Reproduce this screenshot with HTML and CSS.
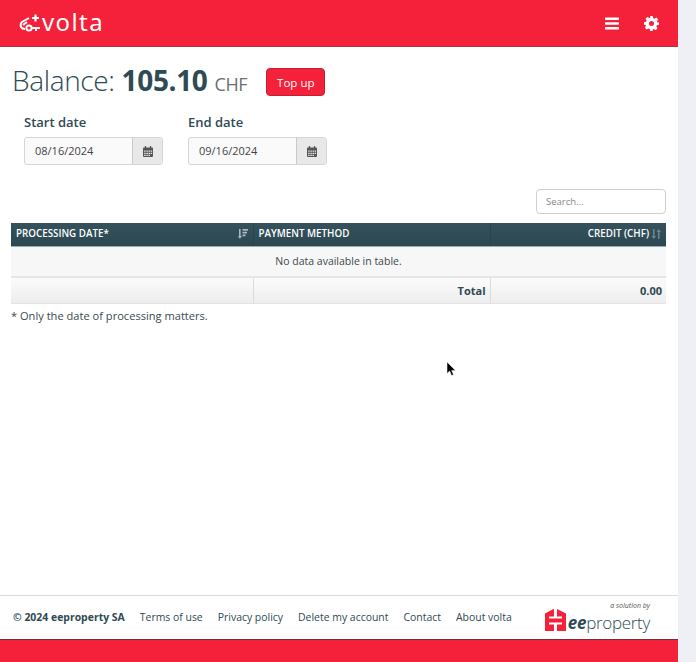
FILE: index.html

```html
<!doctype html>
<html>
<head>
	<meta charset='utf-8'>
	<title>volta</title>
	<link rel="stylesheet" href="styles.css">
</head>
<body>
<div class='app'>
	<div class='page'>
		<header class='topbar'>
			<a class='logo'>
				<svg width='23' height='20' viewBox='0 0 23 20' fill='none' stroke='#fff' stroke-width='2'>
					<path d='M10 5 L3 9 Q1 11 2 14 Q3 16 6 16'/>
					<path d='M8 9 L4 12'/>
					<circle cx='10' cy='15' r='2.6'/>
					<path d='M13 15 H21 M17 15 V18'/>
					<path d='M13 5 H20 M16.5 1.5 V8.5' stroke-width='2.2'/>
				</svg>
				<span class='logo-text'>volta</span>
			</a>
			<div class='topbar-icons'>
				<svg width='14' height='13' viewBox='0 0 14 13' fill='#fff'>
					<rect x='0' y='0.5' width='14' height='2.4' rx='.6'/>
					<rect x='0' y='5.3' width='14' height='2.4' rx='.6'/>
					<rect x='0' y='10.1' width='14' height='2.4' rx='.6'/>
				</svg>
				<svg width='15' height='15' viewBox='0 0 24 24'>
					<path fill='#fff' fill-rule='evenodd' d='M10 0h4l.8 3.4 1.9.8 3-1.8 2.9 2.9-1.8 3 .8 1.9L24 10v4l-3.4.8-.8 1.9 1.8 3-2.9 2.9-3-1.8-1.9.8L14 24h-4l-.8-3.4-1.9-.8-3 1.8-2.9-2.9 1.8-3-.8-1.9L0 14v-4l3.4-.8.8-1.9-1.8-3 2.9-2.9 3 1.8 1.9-.8zM12 8a4 4 0 1 0 0 8 4 4 0 0 0 0-8z'/>
				</svg>
			</div>
		</header>

		<main class='content'>
			<div class='balance'>
				<h1 class='balance-title'>Balance: <b>105.10</b> <small>CHF</small></h1>
				<button class='btn-topup'>Top up</button>
			</div>

			<div class='dates'>
				<div class='date-field'>
					<label>Start date</label>
					<div class='date-input'>
						<span class='date-value'>08/16/2024</span>
						<span class='date-addon'>
							<svg width='10' height='11' viewBox='0 0 11 12' fill='#555'><path fill-rule='evenodd' d='M2 0h1.4v1.5h4.2V0H9v1.5h1c.6 0 1 .4 1 1V11c0 .6-.4 1-1 1H1c-.6 0-1-.4-1-1V2.5c0-.6.4-1 1-1h1zM1.3 5v1.4h1.6V5zm2.4 0v1.4h1.6V5zm2.4 0v1.4h1.6V5zm2.3 0v1.4H10V5zM1.3 7.3v1.4h1.6V7.3zm2.4 0v1.4h1.6V7.3zm2.4 0v1.4h1.6V7.3zm2.3 0v1.4H10V7.3zM1.3 9.5v1.4h1.6V9.5zm2.4 0v1.4h1.6V9.5zm2.4 0v1.4h1.6V9.5z'/></svg>
						</span>
					</div>
				</div>
				<div class='date-field'>
					<label>End date</label>
					<div class='date-input'>
						<span class='date-value'>09/16/2024</span>
						<span class='date-addon'>
							<svg width='10' height='11' viewBox='0 0 11 12' fill='#555'><path fill-rule='evenodd' d='M2 0h1.4v1.5h4.2V0H9v1.5h1c.6 0 1 .4 1 1V11c0 .6-.4 1-1 1H1c-.6 0-1-.4-1-1V2.5c0-.6.4-1 1-1h1zM1.3 5v1.4h1.6V5zm2.4 0v1.4h1.6V5zm2.4 0v1.4h1.6V5zm2.3 0v1.4H10V5zM1.3 7.3v1.4h1.6V7.3zm2.4 0v1.4h1.6V7.3zm2.4 0v1.4h1.6V7.3zm2.3 0v1.4H10V7.3zM1.3 9.5v1.4h1.6V9.5zm2.4 0v1.4h1.6V9.5zm2.4 0v1.4h1.6V9.5z'/></svg>
						</span>
					</div>
				</div>
			</div>

			<div class='search-row'>
				<input class='search' type='text' placeholder='Search...'>
			</div>

			<table class='data-table'>
				<thead>
					<tr>
						<th class='col-date'>
							<div class='th-inner'>PROCESSING DATE*
								<svg width='10' height='10' viewBox='0 0 10 10' fill='#a9b7bc'><path d='M1 0h1.6v7H4L1.8 10 0 7h1zM4.5 0H10v1.8H4.500zM4.5 2.800H9v1.800H4.500zM4.500 5.500H7.500v1.800H4.500z'/></svg>
							</div>
						</th>
						<th class='col-method'>PAYMENT METHOD</th>
						<th class='col-credit'>
							<div class='th-inner th-right'>CREDIT (CHF)
								<svg width='10' height='10' viewBox='0 0 10 10' fill='#6d858d'><path d='M2 0h1.500v7H5L2.800 10 .500 7H2zM7 10H8.500V3H10L7.800 0 5.500 3H7z'/></svg>
							</div>
						</th>
					</tr>
				</thead>
				<tbody>
					<tr><td class='empty' colspan='3'>No data available in table.</td></tr>
				</tbody>
				<tfoot>
					<tr>
						<td></td>
						<td class='num'>Total</td>
						<td class='num'>0.00</td>
					</tr>
				</tfoot>
			</table>
			<p class='note'>* Only the date of processing matters.</p>
			<svg class='cursor' width='10' height='15' viewBox='0 0 10 15'><path d='M0 0v11.500l2.700-2.500 1.800 4.500 2-.8L4.700 8.400H8.500z' fill='#000' stroke='#fff' stroke-width='.5'/></svg>
		</main>

		<footer class='footer'>
			<span class='copyright'>© 2024 eeproperty SA</span>
			<nav class='footer-links'>
				<a>Terms of use</a>
				<a>Privacy policy</a>
				<a>Delete my account</a>
				<a>Contact</a>
				<a>About volta</a>
			</nav>
			<div class='ee-logo'>
				<svg class='ee-mark' width='21' height='22' viewBox='0 0 21 22'>
					<path fill='#f5213a' d='M8.500 0 0 4.500V22h9V0zM12 0v22h9V4.500z'/>
					<path fill='#fff' d='M4 7.500h5v2H4zM4 13.500h5v2H4zM12 7.500h5v2h-5zM12 13.500h5v2h-5z'/>
					<path fill='#f5213a' d='M9 9.500h3v4H9z'/>
				</svg>
				<div class='ee-text'>
					<span class='ee-tag'>a solution by</span>
					<span class='ee-name'><b>ee</b>property</span>
				</div>
			</div>
		</footer>
		<div class='bottombar'></div>
	</div>
	<div class='gutter'></div>
</div>
</body>
</html>
```

FILE: styles.css

```css
*{margin:0;padding:0;box-sizing:border-box;}
body{font-family:"Open Sans","Noto Sans",sans-serif;color:#2e4a54;font-size:11px;background:#fff;}

.app{display:flex;width:696px;height:662px;overflow:hidden;}
.page{width:678px;display:flex;flex-direction:column;}
.gutter{width:18px;background:#eff0f5;}

.topbar{height:47px;flex:none;background:#f5213a;border-bottom:1px solid #b92a3a;display:flex;align-items:center;justify-content:space-between;padding:0 19px;}
.logo{display:flex;align-items:center;gap:0;color:#fff;}
.logo-text{font-family:"Noto Sans",sans-serif;font-size:24px;line-height:24px;letter-spacing:1.4px;position:relative;top:-1px;}
.topbar-icons{display:flex;align-items:center;gap:25px;}

.content{flex:1;position:relative;padding:0 12px 0 11px;}
.cursor{position:absolute;left:447px;top:315px;}

.balance{display:flex;align-items:center;gap:19px;margin-top:15px;height:40px;padding-left:1px;}
.balance-title{font-weight:300;font-size:28px;line-height:36px;color:#2e4a54;white-space:nowrap;letter-spacing:-.35px;}
.balance-title b{font-weight:700;}
.balance-title small{font-size:18px;font-weight:400;color:#6b6f71;}
.btn-topup{width:59px;height:28px;background:#f5213a;border:1px solid #c31f33;border-radius:4px;color:#fff;font:400 11.500px "Open Sans",sans-serif;}

.dates{display:flex;gap:25px;margin-top:11px;padding-left:13px;}
.date-field{width:139px;}
.date-field label{display:block;font-size:13px;font-weight:600;line-height:18px;color:#2e4a54;margin-bottom:6px;}
.date-input{display:flex;height:28px;border:1px solid #d6d6d6;border-radius:3px;background:#fafafa;}
.date-value{flex:1;font-size:11px;line-height:26px;padding-left:10px;color:#444;}
.date-addon{width:30px;background:#e8e8e8;border-left:1px solid #c9c9c9;display:flex;align-items:center;justify-content:center;border-radius:0 3px 3px 0;}

.search-row{display:flex;justify-content:flex-end;margin-top:24px;}
.search{width:130px;height:25px;border:1px solid #cfcfcf;border-radius:4px;padding:0 9px;font:400 9.500px "Open Sans",sans-serif;color:#555;background:#fff;}
.search::placeholder{color:#888;opacity:1;}

.data-table{width:655px;margin-top:9px;border-collapse:collapse;table-layout:fixed;}
.data-table th{height:23px;background:linear-gradient(#34525d,#2c4751);color:#fff;font-size:9.800px;font-weight:600;text-align:left;padding:0 5px 1px;border-bottom:1px solid #9aabb1;}
.col-date{width:242px;}
.col-method{width:237px;border-left:1px solid #2a434c;}
.col-credit{width:176px;border-left:1px solid #2a434c;}
.th-inner{display:flex;align-items:center;justify-content:space-between;}
.th-right{justify-content:flex-end;gap:2px;}
.data-table td{font-size:11px;color:#3c4a4f;}
.data-table .empty{height:31px;background:#f7f7f7;text-align:center;border-bottom:2px solid #e6e6e6;font-size:10.500px;}
.data-table tfoot td{height:26px;background:linear-gradient(#fbfbfb,#ededed);border-bottom:1px solid #e4e4e4;}
.data-table tfoot td+td{border-left:1px solid #dcdcdc;}
.data-table tfoot .num{text-align:right;font-weight:700;font-size:11px;padding-right:4px;color:#2e4a54;}
.note{font-size:11.100px;line-height:15px;margin-top:4px;color:#3c4a4f;}

.footer{height:44px;flex:none;border-top:1px solid #dcdcdc;display:flex;align-items:center;padding:0 28px 1px 13px;background:#fff;font-size:10.450px;}
.copyright{font-weight:700;color:#2e4a54;margin-right:15px;white-space:nowrap;}
.footer-links{display:flex;gap:15px;white-space:nowrap;color:#2e4a54;}
.ee-logo{margin-left:auto;display:flex;align-items:flex-end;gap:2px;}
.ee-mark{margin-bottom:2px;}
.ee-text{display:flex;flex-direction:column;align-items:flex-end;}
.ee-tag{font-size:7px;font-style:italic;line-height:8px;color:#555;margin-bottom:3px;}
.ee-name{font-weight:300;font-size:17px;line-height:20px;color:#2e4a54;letter-spacing:-.3px;}
.ee-name b{font-weight:700;font-style:italic;}
.bottombar{height:23px;flex:none;background:#f5213a;border-top:1px solid #7c2a35;}
```
